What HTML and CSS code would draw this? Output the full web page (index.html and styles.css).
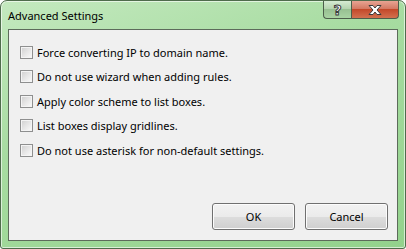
FILE: index.html
```html
<!DOCTYPE html>
<html lang="en">
<head>
    <meta charset="UTF-8">
    <title>Advanced Settings</title>
    <link rel="stylesheet" href="styles.css">
</head>
<body>
    <div class="window">
        <div class="titlebar">
            <span class="title">Advanced Settings</span>
            <div class="caption-buttons">
                <div class="cap-btn help"><span class="help-mark">?</span></div>
                <div class="cap-btn close">
                    <svg width="18" height="12" viewBox="0 0 18 12">
                        <path d="M3 1.5h4l2 2.5 2-2.5h4l-4 4.5 4 4.5h-4l-2-2.5-2 2.5h-4l4-4.5z" fill="#fff" stroke="#3b3b3b" stroke-width="1" stroke-linejoin="round"/>
                    </svg>
                </div>
            </div>
        </div>
        <div class="client">
            <div class="options">
                <label class="check-row"><span class="checkbox"></span>Force converting IP to domain name.</label>
                <label class="check-row"><span class="checkbox"></span>Do not use wizard when adding rules.</label>
                <label class="check-row"><span class="checkbox"></span>Apply color scheme to list boxes.</label>
                <label class="check-row"><span class="checkbox"></span>List boxes display gridlines.</label>
                <label class="check-row"><span class="checkbox"></span>Do not use asterisk for non-default settings.</label>
            </div>
            <div class="buttons">
                <button class="btn">OK</button>
                <button class="btn">Cancel</button>
            </div>
        </div>
    </div>
</body>
</html>
```

FILE: styles.css
```css
body {
    margin: 0;
    background-color: #fff;
    font-family: "Noto Sans", "Open Sans", sans-serif;
    font-size: 11px;
}
.window {
    width: 406px;
    height: 249px;
    box-sizing: border-box;
    display: flex;
    flex-direction: column;
    border: 1px solid #4f6c4c;
    border-radius: 7px 7px 3px 3px;
    background: linear-gradient(160deg, #c4e9bf 0%, #a7dca1 40%, #93d28c 100%);
    box-shadow: inset 0 0 0 1px rgba(255, 255, 255, 0.6);
    padding: 0 7px 7px 7px;
}
.titlebar {
    height: 28px;
    display: flex;
    justify-content: space-between;
    align-items: flex-start;
}
.title {
    margin-top: 7px;
    color: #000;
}
.caption-buttons {
    display: flex;
    margin-right: -1px;
}
.cap-btn {
    height: 17px;
    border: 1px solid #4d5e4b;
    border-top: none;
    display: flex;
    align-items: center;
    justify-content: center;
}
.help {
    width: 27px;
    border-radius: 0 0 0 4px;
    background: linear-gradient(to bottom, #d6ebd3 0%, #b5d4b0 45%, #98c092 50%, #a9d3a3 100%);
    border-right: none;
}
.help-mark {
    font-family: "DejaVu Sans", sans-serif;
    font-weight: bold;
    font-size: 14px;
    line-height: 14px;
    color: #fff;
    -webkit-text-stroke: 1px #3b3b3b;
}
.close {
    width: 46px;
    border-radius: 0 0 4px 0;
    background: linear-gradient(to bottom, #e8a493 0%, #d47a64 45%, #c4492a 50%, #d2704f 100%);
}
.client {
    flex: 1;
    display: flex;
    flex-direction: column;
    justify-content: space-between;
    background-color: #f0f0f0;
    border: 1px solid #5d6b5b;
    padding: 10px 9px 10px 11px;
}
.options {
    display: flex;
    flex-direction: column;
}
.check-row {
    display: flex;
    align-items: center;
    height: 24.5px;
}
.checkbox {
    width: 11px;
    height: 11px;
    border: 1px solid #8e8f8f;
    margin-right: 4px;
    background: linear-gradient(135deg, #cfcfcf 0%, #e6e6e6 50%, #fbfbfb 100%);
    box-shadow: inset 0 0 0 1px #f4f4f4;
}
.buttons {
    display: flex;
    justify-content: flex-end;
    gap: 10px;
}
.btn {
    width: 83px;
    height: 27px;
    font-family: "Noto Sans", "Open Sans", sans-serif;
    font-size: 11px;
    color: #000;
    border: 1px solid #707070;
    border-radius: 3px;
    background: linear-gradient(to bottom, #f2f2f2 0%, #ebebeb 50%, #dddddd 51%, #cfcfcf 100%);
    box-shadow: inset 0 0 0 1px #fcfcfc;
}
```
